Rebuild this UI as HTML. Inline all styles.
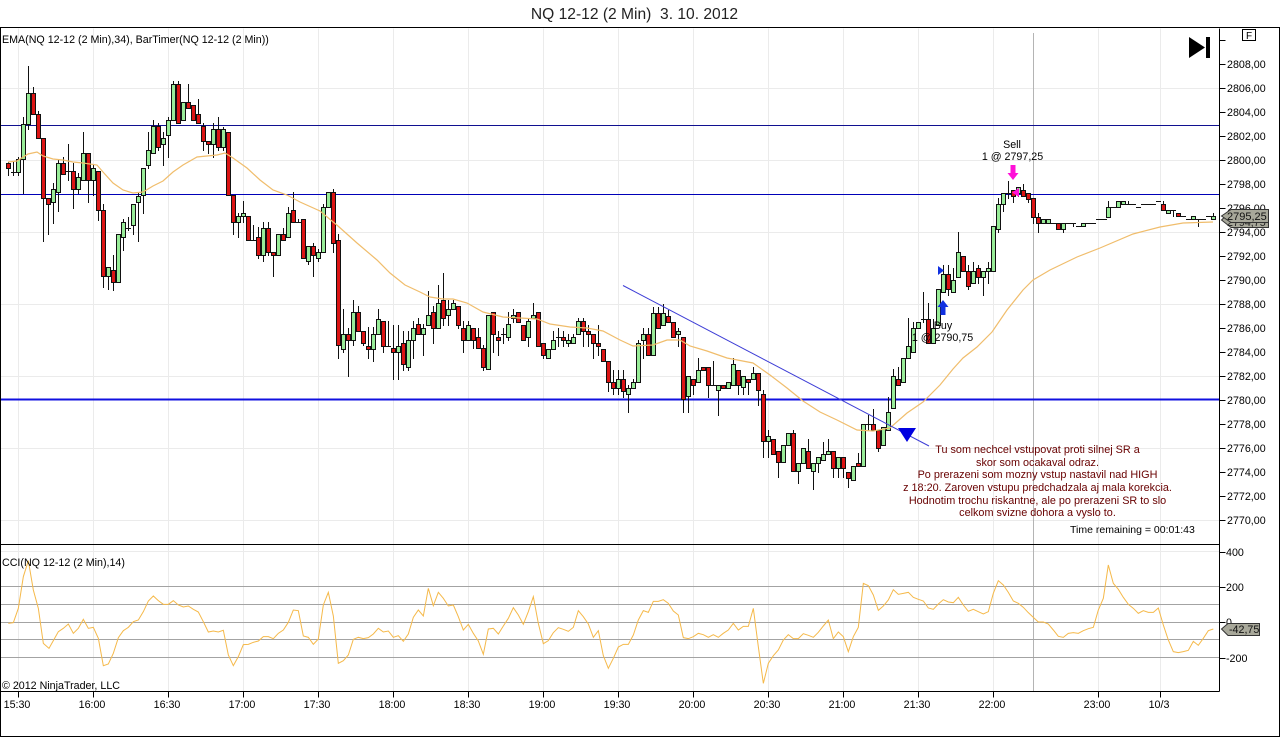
<!DOCTYPE html>
<html><head><meta charset="utf-8"><title>NQ 12-12 (2 Min)</title>
<style>html,body{margin:0;padding:0;background:#fff}svg{display:block}text{font-family:"Liberation Sans",sans-serif;font-size:10.7px;fill:#000}</style></head>
<body>
<svg width="1280" height="737" viewBox="0 0 1280 737" xmlns="http://www.w3.org/2000/svg">
<rect width="1280" height="737" fill="#fff"/>
<text x="634.500" y="19" text-anchor="middle" style="font-size:15.6px;fill:#222">NQ 12-12 (2 Min)&#160; 3. 10. 2012</text>
<g fill="none" stroke="#ebebeb" transform="translate(.5,.5)">
<path d="M18 28V691M93 28V691M168 28V691M243 28V691M318 28V691M393 28V691M468 28V691M543 28V691M618 28V691M693 28V691M768 28V691M843 28V691M918 28V691M993 28V691M1098 28V691M1160 28V691"/>
<path d="M0 88H1219M0 160H1219M0 232H1219M0 304H1219M0 376H1219M0 448H1219M0 520H1219M0 551H1219"/>
</g>
<path d="M1033.500 33V691" stroke="#b4b4b4" fill="none"/>
<path d="M0 586.500H1219M0 604.500H1219M0 622.500H1219M0 639.500H1219M0 657.500H1219" stroke="#a3a3a3" fill="none"/>
<path d="M0 125.500H1219" stroke="#101090" fill="none"/>
<path d="M0 194.500H1219" stroke="#0000b8" fill="none"/>
<path d="M0 399.500H1219" stroke="#1010e0" stroke-width="2" fill="none"/>
<g transform="translate(.5,.5)" fill="none" stroke="#111" stroke-linecap="square">
<path d="M8 162V175M13 162V175M11 172h4M18 157V175M23 117V193M28 66V129M33 87V114M38 111V138M43 138V241M48 198V234M53 183V223M58 160V211M63 157V174M68 144V180M66 171h4M73 163V208M78 173V193M83 132V180M88 153V202M93 165V195M98 171V220M103 204V287M108 267V289M113 255V290M123 219V250M128 217V230M126 228h4M133 204V234M138 192V241M143 168V213M148 132V168M153 120V153M158 123V150M163 132V165M168 117V157M173 81V120M178 81V123M188 84V108M198 99V123M203 123V150M208 141V153M213 123V157M218 117V150M223 127V150M233 195V234M238 213V237M243 201V222M253 225V240M251 240h4M258 227V258M263 222V261M268 222V255M273 252V276M283 228V240M288 207V237M293 192V222M298 219V222M296 222h4M308 246V264M313 243V276M318 249V261M323 204V252M333 189V252M338 234V358M343 309V352M348 328V376M353 300V345M358 306V331M363 331V345M368 327V358M373 327V361M378 309V334M383 321V352M388 321V346M386 346h4M393 325V379M398 325V379M403 331V370M408 331V370M413 321V358M418 318V334M423 324V355M428 291V325M433 306V343M438 285V328M443 273V325M448 300V325M453 300V309M458 306V328M463 321V352M468 321V340M473 328V348M478 328V348M483 345V370M493 312V352M498 331V355M503 328V343M501 334h4M508 312V340M513 309V322M528 318V346M533 303V318M543 343V358M553 331V349M558 328V346M556 337h4M563 331V346M568 334V346M573 334V343M578 318V334M583 318V346M588 325V346M593 334V358M598 325V355M608 361V391M613 370V394M618 370V394M623 370V397M628 385V412M633 379V388M638 340V382M643 328V358M648 328V355M653 307V355M658 307V328M663 304V325M668 310V322M678 328V346M683 337V412M688 376V412M693 379V394M698 358V382M708 367V397M713 361V385M711 385h4M718 385V415M733 358V385M738 370V394M743 376V394M748 379V394M753 367V379M758 373V405M763 390V457M768 430V457M778 451V477M793 430V471M798 463V483M808 439V468M813 463V489M818 457V472M823 442V460M828 439V454M833 451V477M838 457V477M843 457V477M848 472V487M858 453V466M868 415V430M866 424h4M873 409V430M878 430V451M888 397V430M893 369V408M898 367V385M908 318V358M913 322V352M923 292V322M921 319h4M928 303V343M933 319V343M943 265V292M948 265V295M953 268V292M958 232V277M968 265V289M973 262V283M978 265V283M983 271V295M988 262V283M998 198V232M1003 193V211M1008 181V198M1006 193h4M1013 190V202M1018 187V196M1023 184V196M1028 193V202M1033 198V223M1038 213V232M1051 223h4M1063 223V232M1066 223h9M1073 223V226M1076 226h4M1086 223h9M1096 219h10M1108 201V217M1111 207h4M1128 201V204M1126 204h9M1136 207h4M1141 204h14M1156 201h4M1163 201V210M1171 210h4M1173 210V216M1181 216h4M1186 219h4M1196 219h9M1198 219V226M1206 216h4M1213 213V219"/>
<path fill="#98ec98" d="M16 159h4v13h-4zM21 124h4v35h-4zM26 93h4v31h-4zM51 189h4v13h-4zM56 163h4v29h-4zM76 177h4v12h-4zM81 153h4v27h-4zM91 168h4v12h-4zM106 267h4v9h-4zM116 234h4v48h-4zM121 222h4v15h-4zM131 204h4v21h-4zM136 196h4v6h-4zM141 168h4v27h-4zM146 150h4v15h-4zM151 126h4v27h-4zM161 138h4v6h-4zM166 120h4v15h-4zM171 84h4v36h-4zM181 102h4v18h-4zM211 129h4v15h-4zM221 129h4v18h-4zM236 216h4v6h-4zM241 213h4v3h-4zM261 228h4v27h-4zM276 234h4v21h-4zM286 213h4v24h-4zM306 246h4v15h-4zM316 252h4v6h-4zM321 207h4v45h-4zM326 192h4v15h-4zM341 334h4v15h-4zM351 312h4v28h-4zM371 334h4v15h-4zM376 319h4v15h-4zM396 346h4v6h-4zM406 340h4v27h-4zM411 328h4v12h-4zM421 328h4v6h-4zM426 315h4v10h-4zM436 303h4v25h-4zM446 309h4v6h-4zM451 303h4v6h-4zM466 325h4v15h-4zM486 315h4v54h-4zM506 324h4v13h-4zM511 315h4v3h-4zM526 321h4v16h-4zM531 315h4v3h-4zM546 349h4v9h-4zM551 340h4v9h-4zM566 340h4v3h-4zM571 337h4v6h-4zM576 321h4v13h-4zM616 379h4v9h-4zM626 388h4v6h-4zM631 382h4v6h-4zM636 343h4v39h-4zM641 334h4v6h-4zM651 313h4v42h-4zM661 313h4v12h-4zM676 331h4v3h-4zM686 376h4v20h-4zM696 370h4v12h-4zM716 385h4v5h-4zM726 382h4v6h-4zM731 364h4v21h-4zM741 376h4v11h-4zM751 373h4v6h-4zM766 436h4v5h-4zM781 445h4v17h-4zM786 433h4v12h-4zM796 463h4v8h-4zM801 448h4v15h-4zM811 463h4v8h-4zM816 457h4v6h-4zM821 454h4v6h-4zM826 451h4v3h-4zM836 457h4v11h-4zM851 466h4v14h-4zM861 424h4v42h-4zM881 427h4v18h-4zM886 412h4v18h-4zM891 376h4v32h-4zM901 358h4v24h-4zM906 346h4v12h-4zM911 328h4v24h-4zM916 322h4v6h-4zM931 328h4v15h-4zM936 289h4v36h-4zM941 274h4v18h-4zM951 280h4v12h-4zM956 252h4v25h-4zM971 271h4v12h-4zM981 271h4v6h-4zM986 268h4v3h-4zM991 226h4v45h-4zM996 204h4v25h-4zM1001 193h4v11h-4zM1016 187h4v6h-4zM1041 219h4v4h-4zM1046 219h4v4h-4zM1061 223h4v6h-4zM1081 223h4v3h-4zM1106 207h4v10h-4zM1116 201h4v6h-4zM1121 201h4v3h-4zM1166 210h4v3h-4zM1191 216h4v3h-4zM1211 216h4v3h-4z"/>
<path fill="#dc1414" d="M6 163h4v5h-4zM31 93h4v21h-4zM36 114h4v24h-4zM41 138h4v60h-4zM46 198h4v6h-4zM61 163h4v11h-4zM71 171h4v18h-4zM86 153h4v27h-4zM96 171h4v39h-4zM101 210h4v66h-4zM111 270h4v12h-4zM156 126h4v21h-4zM176 84h4v39h-4zM186 102h4v6h-4zM191 105h4v15h-4zM196 114h4v9h-4zM201 126h4v15h-4zM206 141h4v3h-4zM216 129h4v18h-4zM226 132h4v63h-4zM231 195h4v27h-4zM246 216h4v24h-4zM256 237h4v18h-4zM266 228h4v24h-4zM271 252h4v3h-4zM281 234h4v6h-4zM291 210h4v12h-4zM301 219h4v39h-4zM311 246h4v9h-4zM331 192h4v51h-4zM336 240h4v105h-4zM346 334h4v6h-4zM356 312h4v19h-4zM361 331h4v12h-4zM366 346h4v3h-4zM381 321h4v25h-4zM391 348h4v4h-4zM401 343h4v21h-4zM416 324h4v10h-4zM431 312h4v16h-4zM441 300h4v18h-4zM456 306h4v19h-4zM461 328h4v12h-4zM471 328h4v12h-4zM476 337h4v11h-4zM481 348h4v19h-4zM491 312h4v22h-4zM496 337h4v3h-4zM516 312h4v10h-4zM521 325h4v15h-4zM536 312h4v34h-4zM541 343h4v12h-4zM561 337h4v3h-4zM581 321h4v10h-4zM586 331h4v3h-4zM591 334h4v9h-4zM596 343h4v3h-4zM601 349h4v12h-4zM606 361h4v21h-4zM611 382h4v6h-4zM621 379h4v12h-4zM646 334h4v21h-4zM656 313h4v15h-4zM666 316h4v6h-4zM671 322h4v15h-4zM681 337h4v62h-4zM691 379h4v6h-4zM701 367h4v3h-4zM706 367h4v18h-4zM721 385h4v3h-4zM736 370h4v15h-4zM746 379h4v3h-4zM756 373h4v17h-4zM761 394h4v47h-4zM771 439h4v15h-4zM776 451h4v11h-4zM791 433h4v38h-4zM806 451h4v17h-4zM831 451h4v17h-4zM841 457h4v11h-4zM846 472h4v6h-4zM856 463h4v3h-4zM871 424h4v6h-4zM876 430h4v18h-4zM896 379h4v6h-4zM926 319h4v24h-4zM946 274h4v15h-4zM961 256h4v15h-4zM966 271h4v15h-4zM976 268h4v9h-4zM1011 190h4v6h-4zM1021 190h4v6h-4zM1026 193h4v6h-4zM1031 198h4v19h-4zM1036 217h4v6h-4zM1056 223h4v6h-4zM1161 204h4v6h-4zM1176 213h4v3h-4z"/>
</g>
<polyline fill="none" stroke="#f0bd6c" stroke-width="1.200" points="8,162 17,161 28,154 37,152 43,156 53,159 63,160 73,162 83,163 97,165 103,172 113,183 123,190 133,193 143,192 153,186 163,181 173,172 183,165 197,157 207,156 217,155 225,153 233,158 247,168 260,180 273,190 287,195 300,202 320,211 338,226 357,243 377,260 390,273 405,285 420,292 430,297 443,299 453,299 467,303 483,312 503,317 520,318 537,319 550,324 570,327 587,328 603,331 620,340 633,346 653,345 667,340 680,340 690,346 707,351 727,358 753,363 770,375 787,388 803,401 820,412 837,420 857,430 873,431 890,428 907,413 923,402 940,385 953,369 963,358 977,347 992,332 1007,310 1023,290 1033,280 1050,270 1077,257 1100,248 1133,234 1160,227 1183,223 1213,222"/>
<path d="M623 285.500L929 446" stroke="#3d3dd6" fill="none"/>
<path d="M898 428H916L907 442Z" fill="#0000e0"/>
<path d="M1010.500 165h5v8h3l-5.500 7-5.500-7h3z" fill="#ff10d8"/>
<path d="M1019 188v9l-7-4.500z" fill="#ff10d8"/>
<path d="M940.500 315v-8h-3l5.500-7 5.500 7h-3v8z" fill="#1030e0"/>
<path d="M938 266v9l6-4.500z" fill="#1030e0"/>
<g transform="translate(0,540) scale(.33333)" fill="none" stroke="#f5b94a" stroke-width="3">
<polyline points="25,250 40,248 55,205 70,110 85,62 100,150 115,205 130,310 147,325 160,302 175,275 190,265 205,252 220,280 235,265 250,238 265,265 280,262 295,295 310,377 325,372 340,340 355,293 370,272 385,262 400,245 415,240 430,215 445,183 460,168 475,182 490,193 505,193 520,182 535,195 550,201 565,198 580,208 595,216 610,245 625,276 640,273 655,276 670,271 685,345 700,377 715,350 730,314 745,313 760,307 775,303 790,290 805,290 820,296 835,280 850,270 865,247 880,210 895,212 910,288 925,292 940,313 955,297 970,195 985,157 1000,228 1015,370 1030,362 1045,345 1060,298 1075,292 1090,296 1105,293 1120,282 1135,265 1150,276 1165,273 1180,292 1195,287 1210,304 1225,282 1240,232 1255,210 1270,228 1285,145 1300,197 1315,157 1330,175 1345,198 1360,195 1375,230 1390,270 1405,253 1420,280 1435,303 1450,343 1465,267 1480,265 1495,282 1510,258 1525,235 1540,203 1555,225 1570,253 1585,215 1600,170 1615,250 1630,311 1645,302 1660,278 1675,263 1690,268 1705,274 1720,262 1735,212 1750,230 1765,252 1780,292 1795,272 1810,347 1825,385 1840,355 1855,321 1870,313 1885,313 1900,285 1915,240 1930,212 1945,217 1960,184 1975,184 1990,179 2005,190 2020,213 2035,225 2050,293 2065,296 2080,290 2095,280 2110,284 2125,292 2140,284 2155,292 2170,280 2185,270 2200,250 2215,270 2230,259 2245,259 2260,205 2275,320 2290,430 2305,370 2320,347 2335,330 2350,300 2365,284 2380,296 2395,296 2410,281 2425,286 2440,292 2455,277 2470,258 2485,240 2500,296 2515,276 2530,290 2545,335 2560,290 2575,262 2590,130 2605,137 2620,165 2635,211 2650,198 2665,180 2680,149 2695,163 2710,160 2725,157 2740,172 2755,178 2770,183 2785,204 2800,208 2815,192 2830,179 2845,186 2860,188 2875,172 2890,195 2905,214 2920,208 2935,215 2950,222 2965,215 2980,160 2995,122 3010,135 3025,157 3040,183 3055,190 3070,202 3085,218 3100,232 3115,246 3130,246 3145,252 3160,270 3175,289 3190,292 3205,280 3220,278 3235,280 3250,272 3265,266 3280,262 3295,210 3310,175 3325,75 3340,130 3355,148 3370,172 3385,193 3400,205 3415,220 3430,212 3445,217 3460,217 3475,204 3490,255 3505,300 3520,335 3535,338 3550,335 3565,331 3580,304 3595,316 3610,295 3625,272 3640,267"/>
</g>
<g stroke="#000" fill="none" transform="translate(.5,.5)">
<path d="M1219 28V691M0 544H1219M0 691H1219"/>
<path d="M1219 40h6M1219 64h6M1219 88h6M1219 112h6M1219 136h6M1219 160h6M1219 184h6M1219 208h6M1219 232h6M1219 256h6M1219 280h6M1219 304h6M1219 328h6M1219 352h6M1219 376h6M1219 400h6M1219 424h6M1219 448h6M1219 472h6M1219 496h6M1219 520h6M1219 552h6M1219 587h6M1219 622h6M1219 658h6"/>
<path d="M18 691v6M93 691v6M168 691v6M243 691v6M318 691v6M393 691v6M468 691v6M543 691v6M618 691v6M693 691v6M768 691v6M843 691v6M918 691v6M993 691v6M1098 691v6M1160 691v6"/>
</g>
<rect x=".5" y="27.500" width="1279" height="709" fill="none" stroke="#000"/>
<text x="2" y="43">EMA(NQ 12-12 (2 Min),34), BarTimer(NQ 12-12 (2 Min))</text>
<text x="2" y="566">CCI(NQ 12-12 (2 Min),14)</text>
<text x="2" y="689">© 2012 NinjaTrader, LLC</text>
<path d="M1189 37V58L1205 47.500Z M1206 37h4v21h-4z" fill="#000"/>
<rect x="1242.500" y="29.500" width="13" height="11" fill="#fff" stroke="#000"/>
<text x="1249" y="39" text-anchor="middle" style="font-size:10px">F</text>
<g>
<text x="1227" y="68">2808,00</text><text x="1227" y="92">2806,00</text><text x="1227" y="116">2804,00</text><text x="1227" y="140">2802,00</text><text x="1227" y="164">2800,00</text><text x="1227" y="188">2798,00</text><text x="1227" y="212">2796,00</text><text x="1227" y="236">2794,00</text><text x="1227" y="260">2792,00</text><text x="1227" y="284">2790,00</text><text x="1227" y="308">2788,00</text><text x="1227" y="332">2786,00</text><text x="1227" y="356">2784,00</text><text x="1227" y="380">2782,00</text><text x="1227" y="404">2780,00</text><text x="1227" y="428">2778,00</text><text x="1227" y="452">2776,00</text><text x="1227" y="476">2774,00</text><text x="1227" y="500">2772,00</text><text x="1227" y="524">2770,00</text>
<text x="1226" y="556">400</text><text x="1226" y="591">200</text><text x="1226" y="626">0</text><text x="1226" y="662">-200</text>
</g>
<path d="M1221.500 220L1231 211H1268.500V227.500H1231Z" fill="#a8a89a" stroke="#333"/>
<text x="1227" y="226" style="fill:#222">2794,75</text>
<path d="M1221.500 216L1231 209.500H1268.500V222.500H1231Z" fill="#a8a89a" stroke="#333"/>
<text x="1227" y="220" style="fill:#111;font-size:11px">2795,25</text>
<path d="M1221.500 629L1228 623.500H1259.500V635.500H1228Z" fill="#a8a89a" stroke="#333"/>
<text x="1229" y="633" style="fill:#111">-42,75</text>
<g text-anchor="middle">
<text x="17" y="708">15:30</text><text x="92" y="708">16:00</text><text x="167" y="708">16:30</text><text x="242" y="708">17:00</text><text x="317" y="708">17:30</text><text x="392" y="708">18:00</text><text x="467" y="708">18:30</text><text x="542" y="708">19:00</text><text x="617" y="708">19:30</text><text x="692" y="708">20:00</text><text x="767" y="708">20:30</text><text x="842" y="708">21:00</text><text x="917" y="708">21:30</text><text x="992" y="708">22:00</text><text x="1097" y="708">23:00</text><text x="1159" y="708">10/3</text>
<text x="1012" y="148">Sell</text><text x="1012.500" y="160">1 @ 2797,25</text>
<text x="943" y="329">Buy</text><text x="942.500" y="341">1 @ 2790,75</text>
</g>
<g text-anchor="middle">
<text x="1037.500" y="453" style="fill:#680000;font-size:10.85px">Tu som nechcel vstupovat proti silnej SR a</text>
<text x="1037.500" y="466" style="fill:#680000;font-size:10.85px">skor som ocakaval odraz.</text>
<text x="1037.500" y="478" style="fill:#680000;font-size:10.85px">Po prerazeni som mozny vstup nastavil nad HIGH</text>
<text x="1037.500" y="491" style="fill:#680000;font-size:10.85px">z 18:20. Zaroven vstupu predchadzala aj mala korekcia.</text>
<text x="1037.500" y="504" style="fill:#680000;font-size:10.85px">Hodnotim trochu riskantne, ale po prerazeni SR to slo</text>
<text x="1037.500" y="516" style="fill:#680000;font-size:10.85px">celkom svizne dohora a vyslo to.</text>
</g>
<text x="1070" y="533" style="font-size:10.5px">Time remaining = 00:01:43</text>
</svg>
</body></html>
